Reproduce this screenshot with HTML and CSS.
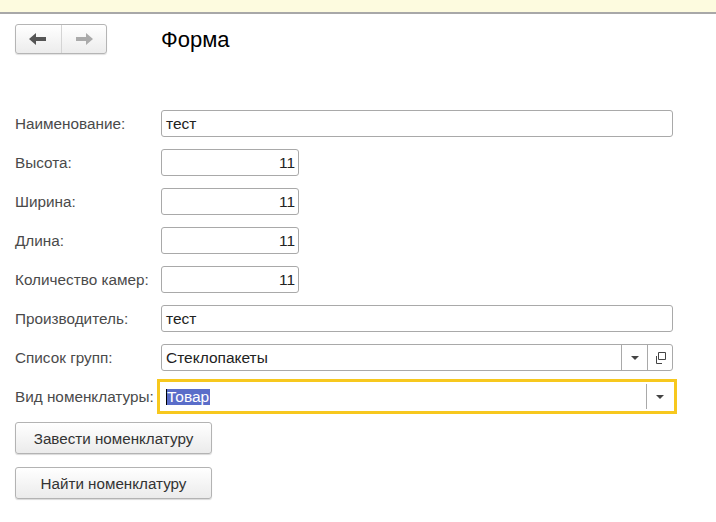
FILE: index.html
```html
<!DOCTYPE html>
<html lang="ru">
<head>
<meta charset="utf-8">
<link rel="stylesheet" href="styles.css">
</head>
<body>
<div class="topbar"></div>
<div class="page">
  <div class="header">
    <div class="nav">
      <span class="nav-btn">
        <svg width="18" height="12" viewBox="0 0 18 12"><path d="M0 6 L7 0 V4 H17 V8 H7 V12 Z" fill="#555"/></svg>
      </span>
      <span class="nav-btn">
        <svg width="18" height="12" viewBox="0 0 18 12"><path d="M18 6 L11 0 V4 H1 V8 H11 V12 Z" fill="#aaa"/></svg>
      </span>
    </div>
    <div class="title">Форма</div>
  </div>
  <div class="form">
    <div class="label">Наименование:</div>
    <div class="field wide"><span class="val">тест</span></div>

    <div class="label">Высота:</div>
    <div class="field num"><span class="val">11</span></div>

    <div class="label">Ширина:</div>
    <div class="field num"><span class="val">11</span></div>

    <div class="label">Длина:</div>
    <div class="field num"><span class="val">11</span></div>

    <div class="label">Количество камер:</div>
    <div class="field num"><span class="val">11</span></div>

    <div class="label">Производитель:</div>
    <div class="field wide"><span class="val">тест</span></div>

    <div class="label">Список групп:</div>
    <div class="field wide combo">
      <span class="val">Стеклопакеты</span>
      <span class="btn-cell"><span class="tri"></span></span>
      <span class="btn-cell">
        <svg width="12" height="12" viewBox="0 0 12 12"><path d="M4.5 0.5 H11.5 V7.5 H4.5 Z" fill="none" stroke="#444"/><path d="M2.5 4 V11.5 H8" fill="none" stroke="#444"/></svg>
      </span>
    </div>

    <div class="label">Вид номенклатуры:</div>
    <div class="field wide combo focused">
      <span class="val"><span class="caret"></span><span class="sel">Товар</span></span>
      <span class="btn-cell"><span class="tri"></span></span>
    </div>
  </div>
  <div class="buttons">
    <button class="btn">Завести номенклатуру</button>
    <button class="btn">Найти номенклатуру</button>
  </div>
</div>
</body>
</html>
```
FILE: styles.css
```css
* { box-sizing: border-box; }
html, body { margin: 0; padding: 0; background: #fff; }
body {
  font-family: "Liberation Sans", Arial, sans-serif;
  font-size: 15px;
  color: #333;
  width: 716px;
  height: 522px;
  overflow: hidden;
}
.topbar {
  height: 14px;
  background: #fdfbdf;
  border-bottom: 2px solid #a8a8a8;
}
.page {
  padding: 10px 0 0 15px;
}
.header {
  display: flex;
  align-items: center;
  height: 30px;
}
.nav {
  display: flex;
  width: 92px;
  height: 30px;
  border: 1px solid #b5b5b5;
  border-radius: 3px;
  background: linear-gradient(#ffffff, #ececec);
  box-shadow: 0 1px 1px rgba(0,0,0,0.12);
}
.nav-btn {
  flex: 1;
  display: flex;
  align-items: center;
  justify-content: center;
}
.nav-btn + .nav-btn { border-left: 1px solid #d4d4d4; }
.title {
  margin-left: 54px;
  font-size: 22px;
  color: #000;
  padding-top: 1px;
}
.form {
  margin-top: 56px;
  display: grid;
  grid-template-columns: 146px 512px;
  row-gap: 12px;
  align-items: center;
}
.label {
  color: #4a4a4a;
  white-space: nowrap;
  height: 27px;
  line-height: 27px;
  font-size: 15.3px;
}
.field {
  height: 27px;
  border: 1px solid #a9a9a9;
  border-radius: 3px;
  background: #fff;
  display: flex;
  align-items: center;
  color: #222;
  font-size: 15.5px;
}
.field .val { flex: 1; padding: 0 4px; white-space: nowrap; }
.wide { width: 512px; }
.num { width: 138px; }
.num .val { text-align: right; padding-right: 3px; }
.combo .btn-cell {
  width: 26px;
  height: 100%;
  border-left: 1px solid #a9a9a9;
  display: flex;
  align-items: center;
  justify-content: center;
}
.combo .btn-cell + .btn-cell { width: 25px; }
.tri {
  width: 0; height: 0;
  border-left: 4px solid transparent;
  border-right: 4px solid transparent;
  border-top: 4px solid #444;
}
.focused {
  border-color: #fff;
  outline: 3px solid #f7c81e;
  outline-offset: 1px;
  border-radius: 0;
}
.focused .btn-cell { border-left-color: #a9a9a9; height: 25px; }
.focused .val { display: flex; align-items: center; }
.caret {
  display: inline-block;
  width: 1px;
  height: 16px;
  background: #000;
}
.sel {
  background: #5a6dc9;
  color: #fff;
  line-height: 16px;
  padding: 0 1px 0 0;
}
.buttons {
  margin-top: 12px;
  display: flex;
  flex-direction: column;
  gap: 13px;
  align-items: flex-start;
}
.btn {
  width: 197px;
  height: 32px;
  font-family: "Liberation Sans", Arial, sans-serif;
  font-size: 15.2px;
  color: #333;
  border: 1px solid #b3b3b3;
  border-radius: 3px;
  background: linear-gradient(#ffffff, #ebebeb);
  box-shadow: 0 1px 1px rgba(0,0,0,0.15);
  padding: 0;
}
```
